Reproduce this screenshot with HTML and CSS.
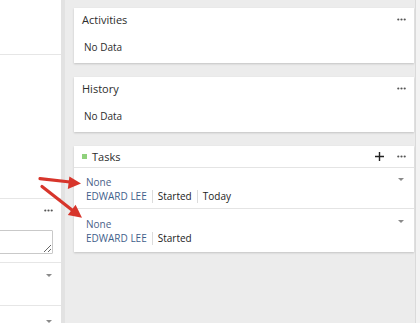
FILE: index.html
```html
<!DOCTYPE html>
<html>
<head>
<meta charset="utf-8">
<link rel="stylesheet" href="styles.css">
</head>
<body>
<div class="page">
  <aside class="side">
    <div class="side-top"></div>
    <div class="side-gap"></div>
    <div class="side-section">
      <div class="side-head">
        <svg class="dots" width="9" height="3" viewBox="0 0 9 3"><circle cx="1.3" cy="1.5" r="1.1"/><circle cx="4.5" cy="1.5" r="1.1"/><circle cx="7.7" cy="1.5" r="1.1"/></svg>
      </div>
      <textarea class="side-text"></textarea>
    </div>
    <div class="side-row"><span class="caret"></span></div>
    <div class="side-row last"><span class="caret"></span></div>
  </aside>
  <main class="main">
    <section class="card">
      <header class="card-head">
        <span class="card-title">Activities</span>
        <svg class="dots" width="9" height="3" viewBox="0 0 9 3"><circle cx="1.3" cy="1.5" r="1.1"/><circle cx="4.5" cy="1.5" r="1.1"/><circle cx="7.7" cy="1.5" r="1.1"/></svg>
      </header>
      <div class="card-body">No Data</div>
    </section>
    <section class="card">
      <header class="card-head">
        <span class="card-title">History</span>
        <svg class="dots" width="9" height="3" viewBox="0 0 9 3"><circle cx="1.3" cy="1.5" r="1.1"/><circle cx="4.5" cy="1.5" r="1.1"/><circle cx="7.7" cy="1.5" r="1.1"/></svg>
      </header>
      <div class="card-body">No Data</div>
    </section>
    <section class="card">
      <header class="card-head bordered">
        <span class="card-title"><span class="square"></span>Tasks</span>
        <span class="head-actions">
          <svg class="plus" width="9" height="9" viewBox="0 0 9 9"><path d="M4.5 0v9M0 4.5h9" stroke="#222" stroke-width="1.4"/></svg>
          <svg class="dots" width="9" height="3" viewBox="0 0 9 3"><circle cx="1.3" cy="1.5" r="1.1"/><circle cx="4.5" cy="1.5" r="1.1"/><circle cx="7.7" cy="1.5" r="1.1"/></svg>
        </span>
      </header>
      <div class="task">
        <div class="task-info">
          <div class="task-name">None</div>
          <div class="task-meta"><span class="owner">EDWARD LEE</span><span class="sep"></span><span>Started</span><span class="sep"></span><span>Today</span></div>
        </div>
        <span class="caret"></span>
      </div>
      <div class="task">
        <div class="task-info">
          <div class="task-name">None</div>
          <div class="task-meta"><span class="owner">EDWARD LEE</span><span class="sep"></span><span>Started</span></div>
        </div>
        <span class="caret"></span>
      </div>
    </section>
  </main>
  <div class="scroll"></div>
  <svg class="arrows" width="420" height="323" viewBox="0 0 420 323">
    <line x1="40" y1="178.6" x2="70" y2="182" stroke="#d7352b" stroke-width="3.2" stroke-linecap="round"/>
    <polygon points="81,183.6 67.8,189 69.4,176.4" fill="#d7352b"/>
    <line x1="42" y1="186.5" x2="72" y2="210" stroke="#d7352b" stroke-width="3.2" stroke-linecap="round"/>
    <polygon points="82,217.8 67.8,215 75.6,204.8" fill="#d7352b"/>
  </svg>
</div>
</body>
</html>
```

FILE: styles.css
```css
* { box-sizing: border-box; }
html, body { margin: 0; padding: 0; }
body {
  width: 420px;
  height: 323px;
  overflow: hidden;
  font-family: "Open Sans", "DejaVu Sans", sans-serif;
  color: #333;
  background: #ececec;
}
.page {
  position: relative;
  display: flex;
  width: 420px;
  height: 323px;
}
.side {
  width: 65px;
  flex: none;
  background: #fff;
  border-right: 4px solid #e2e2e2;
  overflow: hidden;
}
.side-top {
  height: 55px;
  border-bottom: 1px solid #e6e6e6;
}
.side-gap {
  height: 144px;
  border-bottom: 1px solid #e6e6e6;
}
.side-section {
  height: 64px;
  border-bottom: 1px solid #e6e6e6;
  padding-top: 10px;
}
.side-head {
  display: flex;
  justify-content: flex-end;
  padding-right: 8px;
  height: 21px;
}
.side-text {
  display: block;
  width: 62px;
  height: 24px;
  margin-left: -9px;
  border: 1px solid #c9c9c9;
  border-radius: 1px;
  padding: 0;
  background: #fff;
}
.side-row {
  height: 43px;
  border-bottom: 1px solid #e6e6e6;
  display: flex;
  justify-content: flex-end;
  padding: 11px 9px 0 0;
}
.side-row.last { border-bottom: none; padding-top: 14px; }
.dots { fill: #555; display: block; }
.caret {
  display: block;
  width: 0;
  height: 0;
  border-left: 3px solid transparent;
  border-right: 3px solid transparent;
  border-top: 3px solid #8a8a8a;
}
.main {
  flex: 1;
  padding: 8px 1px 0 9px;
  display: flex;
  flex-direction: column;
  gap: 14px;
}
.scroll {
  width: 5px;
  flex: none;
  background: #f3f3f3;
  border-left: 1px solid #dadada;
}
.card {
  background: #fff;
  box-shadow: 0 1px 2px rgba(0, 0, 0, 0.18);
}
.card-head {
  height: 22px;
  display: flex;
  align-items: center;
  justify-content: space-between;
  padding: 0 8px 0 8px;
}
.card-head.bordered { border-bottom: 1px solid #e4e4e4; }
.card-title {
  font-size: 11px;
  color: #2c2c2c;
  display: flex;
  align-items: center;
}
.square {
  width: 5px;
  height: 5px;
  background: #8fd17c;
  margin-right: 5px;
}
.head-actions {
  display: flex;
  align-items: center;
  gap: 13px;
}
.card-body {
  font-size: 10px;
  line-height: 14px;
  padding: 10px 10px 9px;
  color: #2c2c2c;
}
.task {
  display: flex;
  justify-content: space-between;
  align-items: flex-start;
  padding: 7px 10px 5px 12px;
  border-bottom: 1px solid #e4e4e4;
}
.task:last-child { border-bottom: none; padding-top: 8px; padding-bottom: 7px; }
.task .caret { margin-top: 3px; }
.task-name {
  font-size: 10px;
  line-height: 14px;
  color: #4a6288;
}
.task-meta {
  font-size: 10px;
  line-height: 14px;
  display: flex;
  align-items: center;
  color: #222;
}
.owner { color: #3f5f8c; }
.sep {
  width: 1px;
  height: 13px;
  background: #dcdcdc;
  margin: 0 5px;
}
.arrows {
  position: absolute;
  left: 0;
  top: 0;
  pointer-events: none;
}
```
